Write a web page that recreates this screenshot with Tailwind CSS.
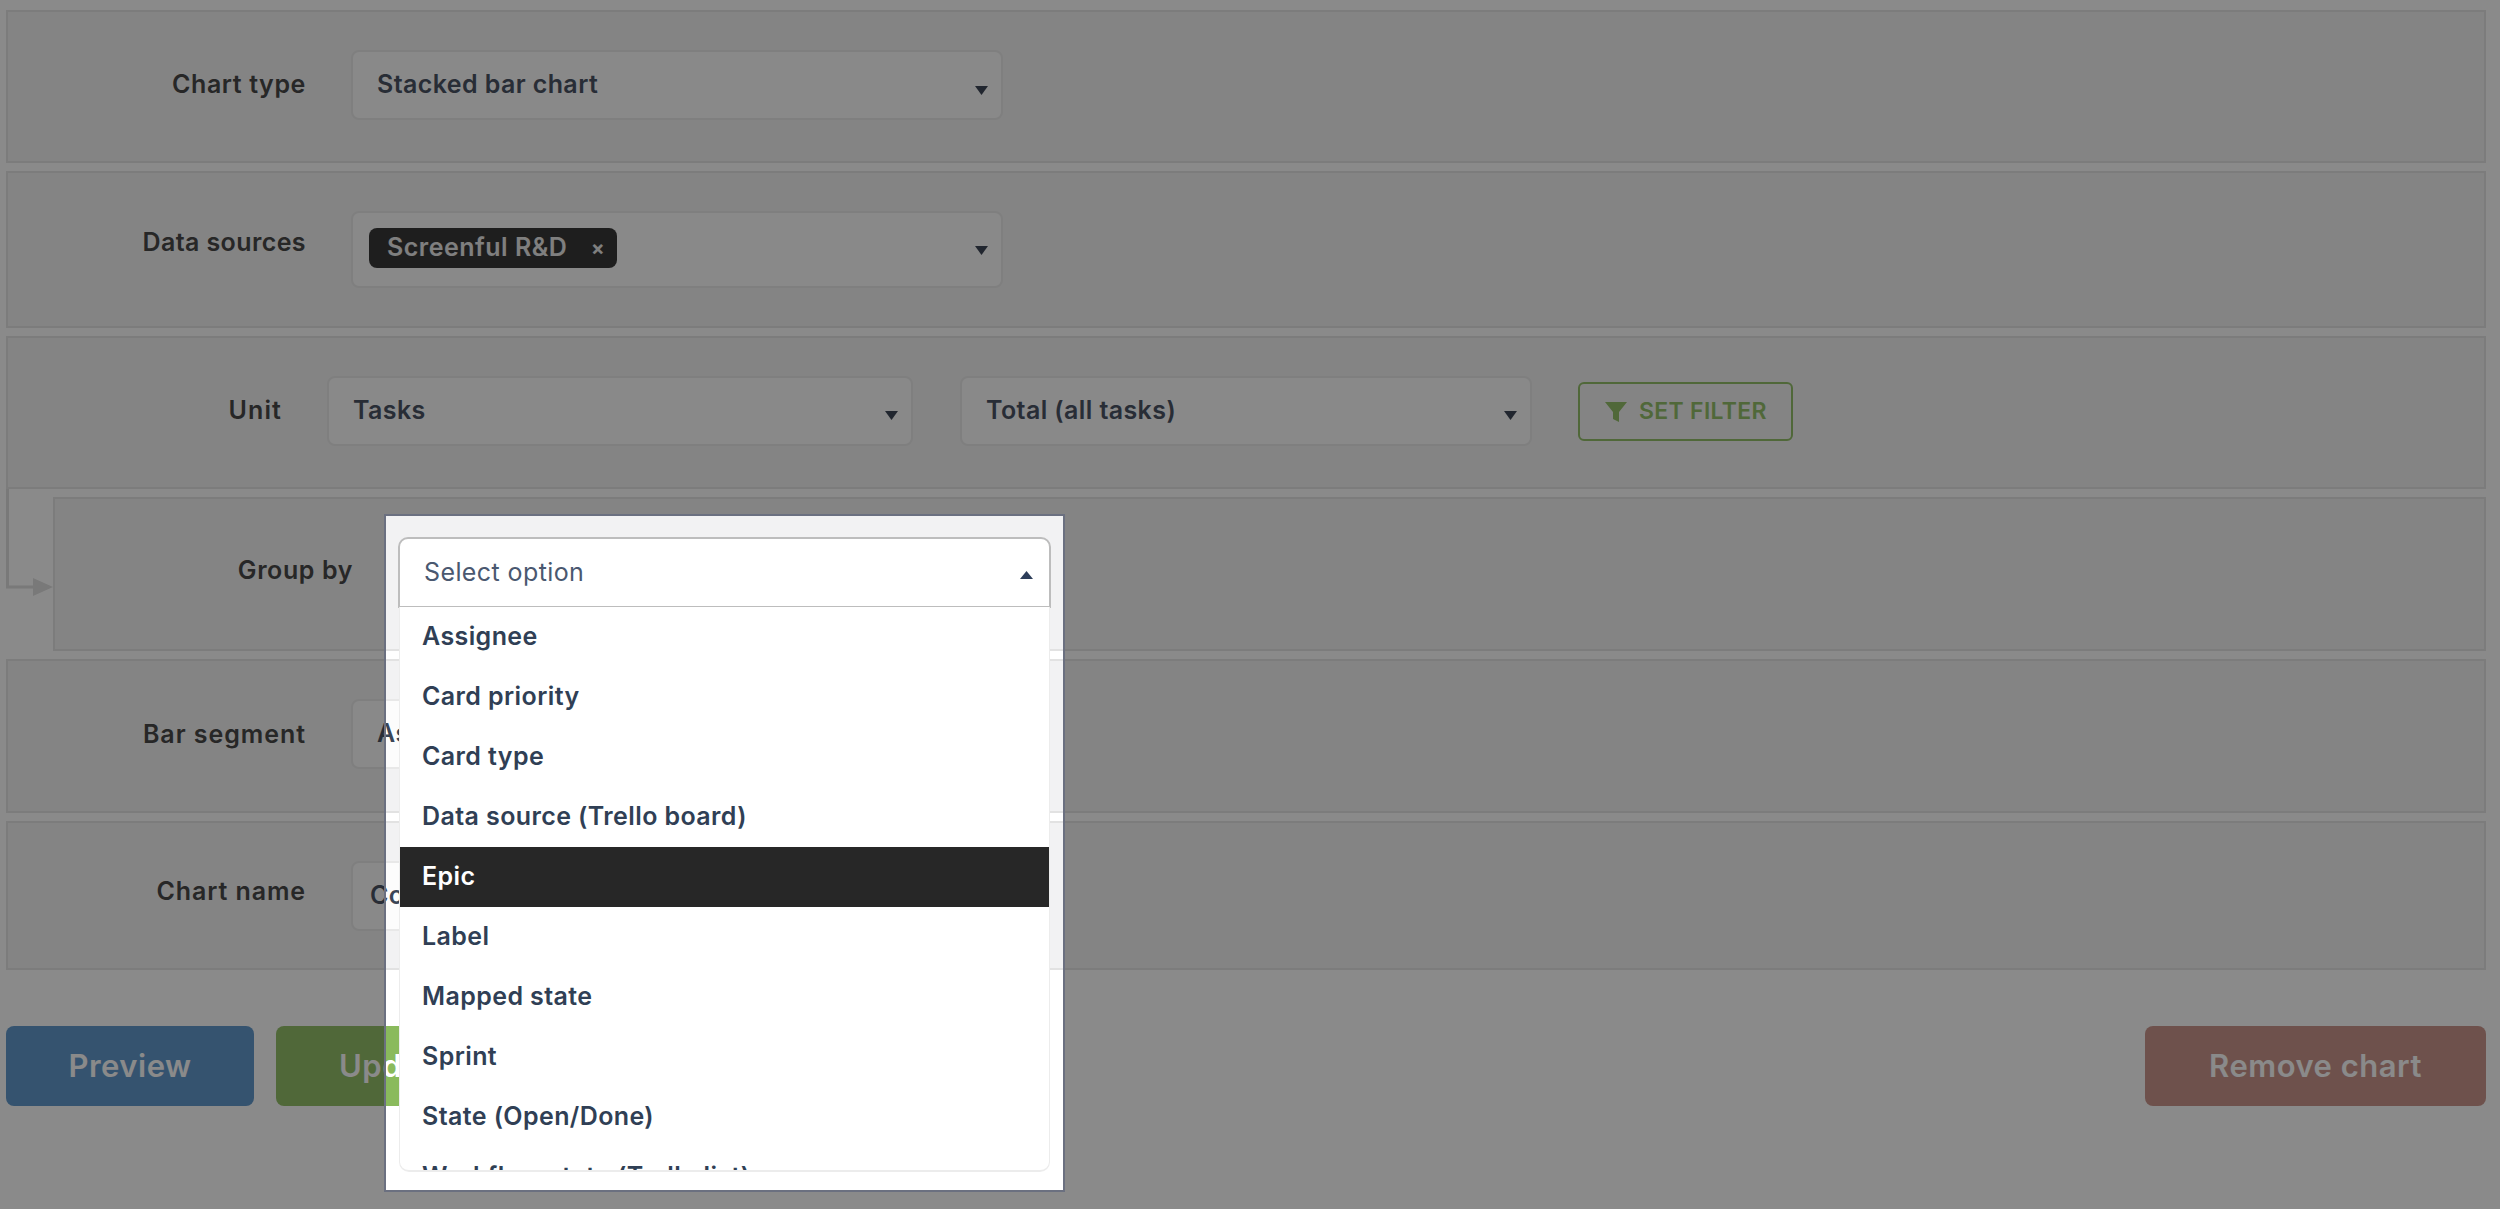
<!DOCTYPE html>
<html>
<head>
<script src="https://cdn.jsdelivr.net/npm/@tailwindcss/browser@4"></script>
</head>
<body class="bg-white overflow-hidden font-['Inter','Liberation_Sans',sans-serif] text-[25px] tracking-[0.4px]">
<div class="relative w-[2500px] h-[1209px] overflow-hidden">
  <div class="flex flex-col gap-[8px] pt-[10px] pl-[6px] pr-[14px]">
    <section class="h-[153px] bg-[#f2f2f3] border-2 border-[#e2e2e2] flex items-center">
      <span class="w-[298px] -mt-[3px] text-right font-semibold text-[#383838] tracking-[0.6px]">Chart type</span>
      <div class="ml-[45px] -mt-[4px] w-[652px] h-[70px] relative bg-[#fcfcfc] border-2 border-[#e8e8e8] rounded-[8px] flex items-center pl-[24px] font-semibold text-[#3a4556]">Stacked bar chart
        <svg class="absolute right-[13px] top-[34px]" width="13" height="9" viewBox="0 0 13 9"><path d="M0 0H13L6.500 9Z" fill="#2d3748"/></svg>
      </div>
    </section>
    <section class="h-[157px] bg-[#f2f2f3] border-2 border-[#e2e2e2] flex items-center">
      <span class="w-[298px] text-right font-semibold text-[#383838] -mt-[14px]">Data sources</span>
      <div class="ml-[45px] w-[652px] h-[77px] relative bg-[#fcfcfc] border-2 border-[#e8e8e8] rounded-[8px] flex items-center pl-[16px]">
        <span class="w-[248px] h-[40px] -mt-[4px] rounded-[8px] bg-[#272727] text-[#e8e8e8] font-semibold pl-[18px] flex items-center tracking-[0.5px]">Screenful R&amp;D<span class="ml-auto mr-[12px] text-[20px] font-bold">×</span></span>
        <svg class="absolute right-[13px] top-[33px]" width="13" height="9" viewBox="0 0 13 9"><path d="M0 0H13L6.500 9Z" fill="#2d3748"/></svg>
      </div>
    </section>
    <section class="h-[153px] bg-[#f2f2f3] border-2 border-[#e2e2e2] flex items-center">
      <span class="w-[274px] -mt-[3px] text-right font-semibold text-[#383838] tracking-[1.100px]">Unit</span>
      <div class="ml-[45px] -mt-[4px] w-[586px] h-[70px] relative bg-[#fcfcfc] border-2 border-[#e8e8e8] rounded-[8px] flex items-center pl-[24px] font-semibold text-[#3a4556]">Tasks
        <svg class="absolute right-[13px] top-[33px]" width="13" height="9" viewBox="0 0 13 9"><path d="M0 0H13L6.500 9Z" fill="#2d3748"/></svg>
      </div>
      <div class="ml-[47px] -mt-[4px] w-[572px] h-[70px] relative bg-[#fcfcfc] border-2 border-[#e8e8e8] rounded-[8px] flex items-center pl-[24px] font-semibold text-[#3a4556]">Total (all tasks)
        <svg class="absolute right-[13px] top-[33px]" width="13" height="9" viewBox="0 0 13 9"><path d="M0 0H13L6.500 9Z" fill="#2d3748"/></svg>
      </div>
      <button class="ml-[46px] -mt-[2px] w-[215px] h-[59px] border-2 border-[#8aba5c] rounded-[6px] flex items-center pl-[25px] gap-[12px] text-[#8aba5c] font-semibold text-[23px] tracking-[0.3px]">
        <svg width="22" height="20" viewBox="0 0 22 20"><path d="M0 0H22L14 10V20L8 17V10Z" fill="#8aba5c"/></svg>SET FILTER
      </button>
    </section>
    <section class="relative ml-[47px] h-[154px] bg-[#f2f2f3] border-2 border-[#e2e2e2] flex items-center">
      <span class="w-[298px] text-right font-semibold text-[#383838] -mt-[6px] tracking-[0.6px]">Group by</span>
      <svg class="absolute left-[-49px] top-[-10px]" width="49" height="110" viewBox="0 0 49 110"><path d="M1.500 0V98H30" fill="none" stroke="#dcdcdc" stroke-width="3"/><path d="M27 89L47 98L27 107Z" fill="#dcdcdc"/></svg>
    </section>
    <section class="h-[154px] bg-[#f2f2f3] border-2 border-[#e2e2e2] flex items-center">
      <span class="w-[298px] -mt-[3px] text-right font-semibold text-[#383838] tracking-[0.95px]">Bar segment</span>
      <div class="ml-[45px] -mt-[4px] w-[652px] h-[70px] bg-[#fcfcfc] border-2 border-[#e8e8e8] rounded-[8px] flex items-center pl-[24px] font-semibold text-[#3a4556]">Assignee</div>
    </section>
    <section class="h-[149px] bg-[#f2f2f3] border-2 border-[#e2e2e2] flex items-center">
      <span class="w-[298px] text-right font-semibold text-[#383838] -mt-[8px] tracking-[0.9px]">Chart name</span>
      <div class="ml-[45px] w-[652px] h-[70px] bg-[#fcfcfc] border-2 border-[#e8e8e8] rounded-[8px] flex items-center pl-[17px] font-semibold text-[#3a4556]">Contributors</div>
    </section>
    <div class="flex mt-[48px] gap-[22px] font-semibold text-[31px] tracking-[0.5px] text-white">
      <button class="w-[248px] h-[80px] rounded-[8px] bg-[#5591c8]">Preview</button>
      <button class="w-[300px] h-[80px] rounded-[8px] bg-[#8aba5c] text-left pl-[63px]">Update</button>
      <button class="ml-auto w-[341px] h-[80px] rounded-[8px] bg-[#c68d83]">Remove chart</button>
    </div>
  </div>

  <!-- spotlight window -->
  <div class="absolute left-[384px] top-[514px] w-[681px] h-[678px] border-2 border-[#6b7080] shadow-[0_0_0_3000px_rgba(22,22,22,0.5)]">
    <div class="absolute left-[12px] top-[21px] w-[653px] h-[71px] bg-white border-2 border-[#bdbdbd] rounded-t-[10px] flex items-center pl-[24px] text-[#4a5870] font-normal">Select option
      <svg class="absolute right-[16px] top-[32px]" width="13" height="8" viewBox="0 0 13 8"><path d="M0 8H13L6.500 0Z" fill="#2d3e5a"/></svg>
    </div>
    <ul class="absolute left-[13px] top-[91px] w-[651px] h-[565px] bg-white border-x border-b-2 border-[#ececec] rounded-b-[10px] overflow-hidden font-semibold text-[#303f55]">
      <li class="h-[60px] flex items-center pl-[22px]">Assignee</li>
      <li class="h-[60px] flex items-center pl-[22px]">Card priority</li>
      <li class="h-[60px] flex items-center pl-[22px]">Card type</li>
      <li class="h-[60px] flex items-center pl-[22px]">Data source (Trello board)</li>
      <li class="h-[60px] flex items-center pl-[22px] bg-[#272727] text-white">Epic</li>
      <li class="h-[60px] flex items-center pl-[22px]">Label</li>
      <li class="h-[60px] flex items-center pl-[22px]">Mapped state</li>
      <li class="h-[60px] flex items-center pl-[22px]">Sprint</li>
      <li class="h-[60px] flex items-center pl-[22px]">State (Open/Done)</li>
      <li class="h-[60px] flex items-center pl-[22px]">Workflow state (Trello list)</li>
    </ul>
  </div>
</div>
</body>
</html>
